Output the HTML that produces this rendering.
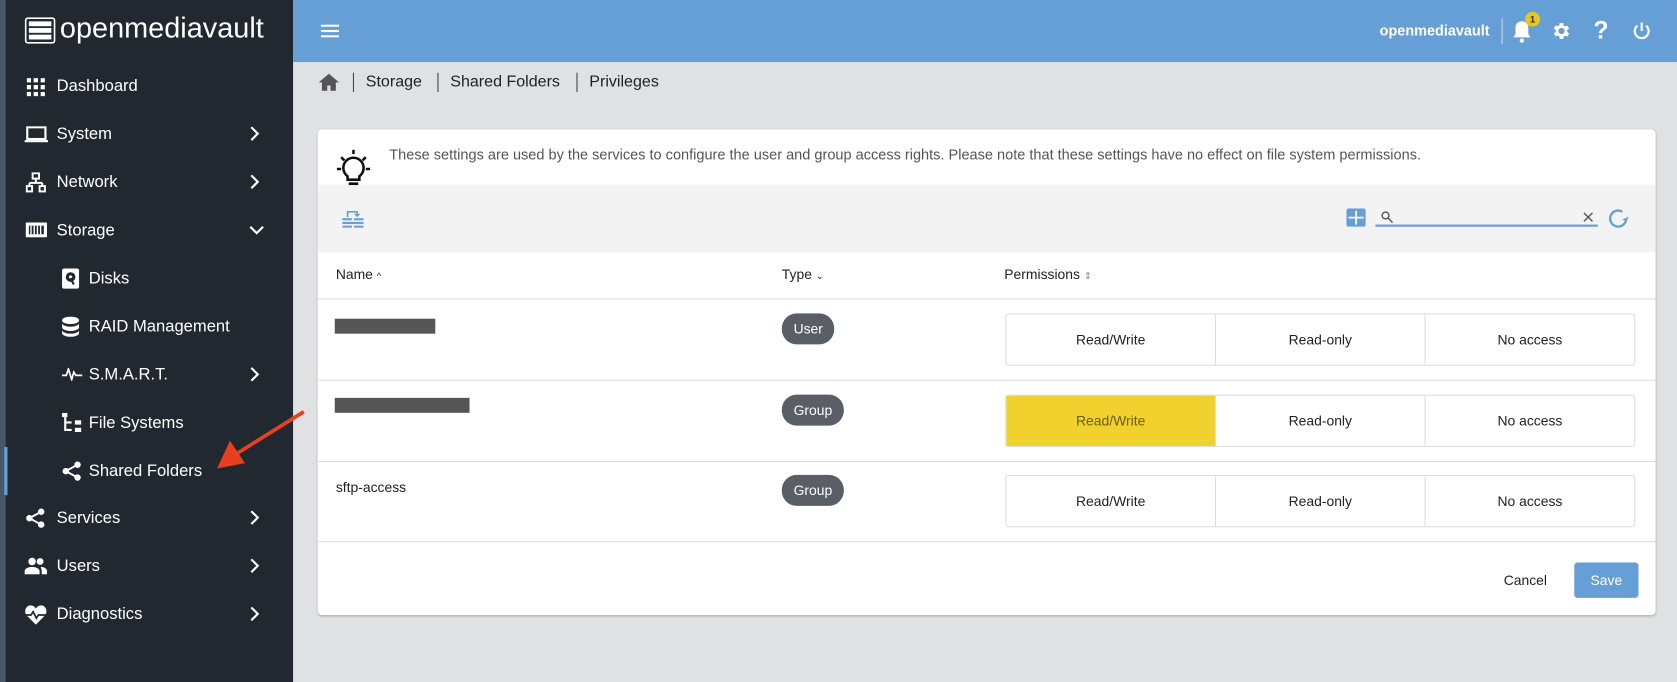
<!DOCTYPE html>
<html><head><meta charset="utf-8"><style>
*{box-sizing:border-box;margin:0;padding:0}
html,body{width:1677px;height:682px;overflow:hidden;background:#e0e1e3;font-family:"Liberation Sans",sans-serif}
#w{position:absolute;left:0;top:0;width:1568px;height:638px;transform:scale(1.0695);transform-origin:0 0;background:#e0e1e3}
.abs{position:absolute}
#edge{left:0;top:0;width:5px;height:638px;background:#4a5566}
#side{left:5px;top:0;width:269px;height:638px;background:#212830;color:#fff}
.item{position:absolute;left:0;width:269px;height:45px;font-size:15.5px;color:#fff}
.item .t{position:absolute;top:14px}
.item svg.i{position:absolute;top:13px}
.chev{position:absolute;left:228px;top:15px}
#top{left:274px;top:0;width:1294px;height:58px;background:#659fd5}
#card{left:297px;top:121px;width:1251px;height:454px;background:#fff;border-radius:4px;box-shadow:0 1px 2px rgba(0,0,0,.2)}
.row{position:absolute;left:0;width:1251px;border-bottom:1px solid #ddd}
.badge{position:absolute;background:#5a5f66;color:#fff;font-size:13px;border-radius:14px;height:29px;line-height:29px;padding:0 11px}
.perm{position:absolute;left:643px;width:589px;height:49px;border:1px solid #ddd;border-radius:3px;display:flex}
.perm div{flex:1;text-align:center;line-height:47px;font-size:13px;color:#222;border-left:1px solid #ddd}
.perm div:first-child{border-left:none}
.red{position:absolute;left:16px;height:14px;background:#555}
</style></head><body><div id="w">
<div id="edge" class="abs"></div>
<div id="side" class="abs">
 <svg class="abs" style="left:18px;top:16px" width="29" height="25" viewBox="0 0 29 25"><rect x="1" y="1" width="27" height="23" rx="2" fill="none" stroke="#fff" stroke-width="1.5"/><rect x="4" y="4" width="21" height="4.5" fill="#fff"/><rect x="4" y="10.2" width="21" height="4.5" fill="#fff"/><rect x="4" y="16.4" width="21" height="4.5" fill="#fff"/></svg>
 <div class="abs" style="left:51px;top:11px;font-size:27px;color:#fff">openmediavault</div>
 <div class="item" style="top:58px"><svg class="i" style="left:20px;top:15px" width="17" height="17" viewBox="0 0 17 17" fill="#fff"><rect x="0" y="0" width="4" height="4"/><rect x="6.5" y="0" width="4" height="4"/><rect x="13" y="0" width="4" height="4"/><rect x="0" y="6.5" width="4" height="4"/><rect x="6.5" y="6.5" width="4" height="4"/><rect x="13" y="6.5" width="4" height="4"/><rect x="0" y="13" width="4" height="4"/><rect x="6.5" y="13" width="4" height="4"/><rect x="13" y="13" width="4" height="4"/></svg><span class="t" style="left:48px">Dashboard</span></div>
 <div class="item" style="top:103px"><svg class="i" style="left:18px;top:15px" width="22" height="16" viewBox="0 0 22 16"><rect x="2.5" y="1" width="17" height="11" fill="none" stroke="#fff" stroke-width="2"/><rect x="0" y="13" width="22" height="2" fill="#fff"/></svg><span class="t" style="left:48px">System</span><svg class="chev" width="10" height="14" viewBox="0 0 10 14"><path d="M2 1l6 6-6 6" stroke="#fff" stroke-width="2" fill="none"/></svg></div>
 <div class="item" style="top:148px"><svg class="i" style="left:19px;top:13px" width="19" height="19" viewBox="0 0 19 19" fill="none" stroke="#fff" stroke-width="1.8"><rect x="6.5" y="1" width="6" height="5"/><path d="M9.5 6v4M3.5 10h12M3.5 10v3M15.5 10v3"/><rect x="1" y="13" width="5" height="5"/><rect x="13" y="13" width="5" height="5"/></svg><span class="t" style="left:48px">Network</span><svg class="chev" width="10" height="14" viewBox="0 0 10 14"><path d="M2 1l6 6-6 6" stroke="#fff" stroke-width="2" fill="none"/></svg></div>
 <div class="item" style="top:193px"><svg class="i" style="left:19px;top:15px" width="20" height="14" viewBox="0 0 20 14"><rect x="0" y="0" width="20" height="14" rx="1" fill="#fff"/><rect x="3" y="3" width="14" height="8" fill="#212830"/><path d="M5 3v8M8 3v8M11 3v8M14 3v8" stroke="#fff" stroke-width="1.3"/></svg><span class="t" style="left:48px">Storage</span><svg class="chev" style="top:17px" width="14" height="10" viewBox="0 0 14 10"><path d="M1 2l6 6 6-6" stroke="#fff" stroke-width="2" fill="none"/></svg></div>
 <div class="item" style="top:238px"><svg class="i" style="left:53px;top:13px" width="16" height="19" viewBox="0 0 16 19"><rect x="0" y="0" width="16" height="19" rx="2" fill="#fff"/><circle cx="8" cy="8" r="4.5" fill="#212830"/><circle cx="8" cy="8" r="1.5" fill="#fff"/><path d="M8 9l3 6" stroke="#212830" stroke-width="2"/></svg><span class="t" style="left:78px">Disks</span></div>
 <div class="item" style="top:283px"><svg class="i" style="left:53px;top:13px" width="16" height="19" viewBox="0 0 16 19" fill="#fff"><ellipse cx="8" cy="3.5" rx="8" ry="3.5"/><path d="M0 6c0 2 4 3.5 8 3.5s8-1.5 8-3.5v4c0 2-4 3.5-8 3.5S0 12 0 10z"/><path d="M0 12.5c0 2 4 3.5 8 3.5s8-1.5 8-3.5v3c0 2-4 3.5-8 3.5S0 17.5 0 15.5z"/></svg><span class="t" style="left:78px">RAID Management</span></div>
 <div class="item" style="top:328px"><svg class="i" style="left:53px;top:16px" width="19" height="12" viewBox="0 0 19 12"><path d="M0 7h4l2-6 3 10 2-7 2 3h6" stroke="#fff" stroke-width="1.6" fill="none"/></svg><span class="t" style="left:78px">S.M.A.R.T.</span><svg class="chev" width="10" height="14" viewBox="0 0 10 14"><path d="M2 1l6 6-6 6" stroke="#fff" stroke-width="2" fill="none"/></svg></div>
 <div class="item" style="top:373px"><svg class="i" style="left:53px;top:13px" width="18" height="18" viewBox="0 0 18 18" fill="#fff"><rect x="0" y="0" width="5" height="4"/><rect x="2" y="4" width="2" height="13"/><rect x="4" y="8" width="5" height="2"/><rect x="4" y="15" width="5" height="2"/><rect x="12" y="7" width="6" height="4"/><rect x="12" y="14" width="6" height="4"/></svg><span class="t" style="left:78px">File Systems</span></div>
 <div class="abs" style="left:-1px;top:418px;width:3px;height:45px;background:#659fd5"></div>
 <div class="item" style="top:418px"><svg class="i" style="left:53px;top:13px" width="18" height="19" viewBox="0 0 18 19"><circle cx="14.5" cy="3.5" r="3" fill="#fff"/><circle cx="3.5" cy="9.5" r="3" fill="#fff"/><circle cx="14.5" cy="15.5" r="3" fill="#fff"/><path d="M14.5 3.5L3.5 9.5l11 6" stroke="#fff" stroke-width="1.8" fill="none"/></svg><span class="t" style="left:78px">Shared Folders</span></div>
 <div class="item" style="top:462px"><svg class="i" style="left:19px;top:13px" width="18" height="19" viewBox="0 0 18 19"><circle cx="14.5" cy="3.5" r="3" fill="#fff"/><circle cx="3.5" cy="9.5" r="3" fill="#fff"/><circle cx="14.5" cy="15.5" r="3" fill="#fff"/><path d="M14.5 3.5L3.5 9.5l11 6" stroke="#fff" stroke-width="1.8" fill="none"/></svg><span class="t" style="left:48px">Services</span><svg class="chev" width="10" height="14" viewBox="0 0 10 14"><path d="M2 1l6 6-6 6" stroke="#fff" stroke-width="2" fill="none"/></svg></div>
 <div class="item" style="top:507px"><svg class="i" style="left:18px;top:14px" width="21" height="16" viewBox="0 0 21 16" fill="#fff"><circle cx="7" cy="4" r="3.5"/><circle cx="14.5" cy="4" r="3.2"/><path d="M0 16v-3c0-2.5 4-4 7-4s7 1.5 7 4v3z"/><path d="M15 9c3 0 6 1.5 6 4v3h-5v-3c0-1.5-.5-3-1-4z"/></svg><span class="t" style="left:48px">Users</span><svg class="chev" width="10" height="14" viewBox="0 0 10 14"><path d="M2 1l6 6-6 6" stroke="#fff" stroke-width="2" fill="none"/></svg></div>
 <div class="item" style="top:552px"><svg class="i" style="left:18px;top:14px" width="21" height="18" viewBox="0 0 21 18"><path d="M10.5 18L2 9.5C-1 6 1 0 5.5 0c2.5 0 4 1.5 5 3 1-1.5 2.5-3 5-3C20 0 22 6 19 9.5z" fill="#fff"/><path d="M1 9h5l2-3 3 6 2-3h7" stroke="#212830" stroke-width="1.6" fill="none"/></svg><span class="t" style="left:48px">Diagnostics</span><svg class="chev" width="10" height="14" viewBox="0 0 10 14"><path d="M2 1l6 6-6 6" stroke="#fff" stroke-width="2" fill="none"/></svg></div>
</div>
<svg class="abs" style="left:195px;top:380px" width="95" height="70" viewBox="0 0 95 70"><path d="M89 5L25 45" stroke="#e8401c" stroke-width="3.5"/><path d="M8 58L20 32 34 53z" fill="#e8401c"/></svg>
<div id="top" class="abs">
 <svg class="abs" style="left:26px;top:23px" width="17" height="12" viewBox="0 0 17 12" fill="#fff"><rect y="0" width="17" height="2"/><rect y="5" width="17" height="2"/><rect y="10" width="17" height="2"/></svg>
 <div class="abs" style="left:1016px;top:21px;color:#fff;font-size:13.5px;font-weight:bold">openmediavault</div>
 <div class="abs" style="left:1130px;top:17px;width:1px;height:24px;background:#c9dcf0"></div>
 <svg class="abs" style="left:1139px;top:18px" width="20" height="24" viewBox="0 0 20 24" fill="#fff"><path d="M10 2c-4 0-6 3-6 6v6l-2 3h16l-2-3V8c0-3-2-6-6-6z"/><circle cx="10" cy="20" r="2"/></svg>
 <div class="abs" style="left:1152px;top:11px;width:14px;height:14px;border-radius:7px;background:#e5c622;color:#333;font-size:9px;font-weight:bold;text-align:center;line-height:14px">1</div>
 <svg class="abs" style="left:1176px;top:19px" width="20" height="20" viewBox="0 0 24 24" fill="#fff"><path d="M19.4 13a7.5 7.5 0 000-2l2.1-1.6-2-3.5-2.5 1a7 7 0 00-1.7-1L15 3h-4l-.4 2.7a7 7 0 00-1.7 1l-2.5-1-2 3.5L6.6 11a7.5 7.5 0 000 2l-2.1 1.6 2 3.5 2.5-1a7 7 0 001.7 1L11 21h4l.4-2.7a7 7 0 001.7-1l2.5 1 2-3.5zM13 15.5A3.5 3.5 0 1113 8.5a3.5 3.5 0 010 7z" transform="translate(-1 0)"/></svg>
 <div class="abs" style="left:1216px;top:15px;color:#fff;font-size:23px;font-weight:bold">?</div>
 <svg class="abs" style="left:1252px;top:20px" width="18" height="18" viewBox="0 0 18 18" fill="none" stroke="#fff" stroke-width="2"><path d="M9 1v8"/><path d="M5 4a6.5 6.5 0 108 0"/></svg>
</div>
<svg class="abs" style="left:298px;top:69px" width="19" height="16" viewBox="0 0 19 16" fill="#555"><path d="M9.5 0L0 8h3v8h5v-5h3v5h5V8h3z"/></svg>
<div class="abs" style="left:330px;top:68px;width:1px;height:18px;background:#444"></div>
<div class="abs" style="left:342px;top:68px;font-size:15px;color:#222">Storage</div>
<div class="abs" style="left:409px;top:68px;width:1px;height:18px;background:#444"></div>
<div class="abs" style="left:421px;top:68px;font-size:15px;color:#222">Shared Folders</div>
<div class="abs" style="left:539px;top:68px;width:1px;height:18px;background:#444"></div>
<div class="abs" style="left:551px;top:68px;font-size:15px;color:#222">Privileges</div>
<div id="card" class="abs">
 <svg class="abs" style="left:17px;top:19px" width="33" height="34" viewBox="0 0 33 34" fill="none" stroke="#111" stroke-width="2.4"><path d="M16.5 0v4M1 18h4M28 18h4M5 7l3 3M28 7l-3 3"/><path d="M11 25c-2-2-4-4-4-8a9.5 9.5 0 0119 0c0 4-2 6-4 8v3H11z"/><path d="M12 32h9" stroke-width="3"/></svg>
 <div class="abs" style="left:67px;top:16px;font-size:13.6px;color:#555">These settings are used by the services to configure the user and group access rights. Please note that these settings have no effect on file system permissions.</div>
 <div class="abs" style="left:0;top:52px;width:1251px;height:63px;background:#f3f3f3"></div>
 <svg class="abs" style="left:23px;top:75px" width="20" height="17" viewBox="0 0 20 17" fill="#659fd5"><path d="M5 7V2h9v3" stroke="#659fd5" stroke-width="1.5" fill="none"/><path d="M11 4h6l-3 3z"/><rect x="0" y="8" width="9" height="2"/><rect x="11" y="8" width="9" height="2"/><rect x="0" y="11.5" width="20" height="2"/><rect x="0" y="15" width="9" height="2"/><rect x="11" y="15" width="9" height="2"/></svg>
 <svg class="abs" style="left:962px;top:74px" width="18" height="17" viewBox="0 0 18 17"><rect x="0" y="0" width="18" height="17" rx="2" fill="#659fd5"/><path d="M2 8.5h14M9 2v13" stroke="#fff" stroke-width="1.6"/></svg>
 <svg class="abs" style="left:994px;top:76px" width="12" height="12" viewBox="0 0 12 12" fill="none" stroke="#555" stroke-width="1.3"><circle cx="4.5" cy="4.5" r="3.2"/><path d="M7 7l4 4"/></svg>
 <svg class="abs" style="left:1183px;top:77px" width="10" height="10" viewBox="0 0 10 10" stroke="#555" stroke-width="1.3"><path d="M1 1l8 8M9 1l-8 8"/></svg>
 <div class="abs" style="left:989px;top:89px;width:208px;height:1.5px;background:#659fd5"></div>
 <svg class="abs" style="left:1206px;top:73px" width="21" height="21" viewBox="0 0 21 21" fill="none" stroke="#659fd5" stroke-width="2.2"><path d="M17.5 11A7.5 7.5 0 1114 4"/><path d="M13.5 11.5l4.5 1 2-4z" fill="#659fd5" stroke="none"/></svg>
 <div class="row" style="top:115px;height:44px"></div>
 <div class="abs" style="left:17px;top:128px;font-size:13px;color:#222">Name <span style="font-size:9px">^</span></div>
 <div class="abs" style="left:434px;top:128px;font-size:13px;color:#222">Type <span style="font-size:9px">&#8964;</span></div>
 <div class="abs" style="left:642px;top:128px;font-size:13px;color:#222">Permissions <span style="font-size:9px;color:#888">&#8661;</span></div>
 <div class="row" style="top:159px;height:76px"></div>
 <div class="red" style="top:177px;width:94px"></div>
 <div class="badge" style="left:434px;top:172px">User</div>
 <div class="perm" style="top:172px"><div>Read/Write</div><div>Read-only</div><div>No access</div></div>
 <div class="row" style="top:235px;height:76px"></div>
 <div class="red" style="top:251px;width:126px"></div>
 <div class="badge" style="left:434px;top:248px">Group</div>
 <div class="perm" style="top:248px"><div style="background:#f0d12d;color:#6b5c10">Read/Write</div><div>Read-only</div><div>No access</div></div>
 <div class="row" style="top:311px;height:75px"></div>
 <div class="abs" style="left:17px;top:327px;font-size:13px;color:#222">sftp-access</div>
 <div class="badge" style="left:434px;top:323px">Group</div>
 <div class="perm" style="top:323px"><div>Read/Write</div><div>Read-only</div><div>No access</div></div>
 <div class="abs" style="left:1109px;top:414px;font-size:13px;color:#222">Cancel</div>
 <div class="abs" style="left:1175px;top:405px;width:60px;height:33px;background:#659fd5;border-radius:3px;color:#fff;font-size:13px;text-align:center;line-height:33px">Save</div>
</div>
</div></body></html>
